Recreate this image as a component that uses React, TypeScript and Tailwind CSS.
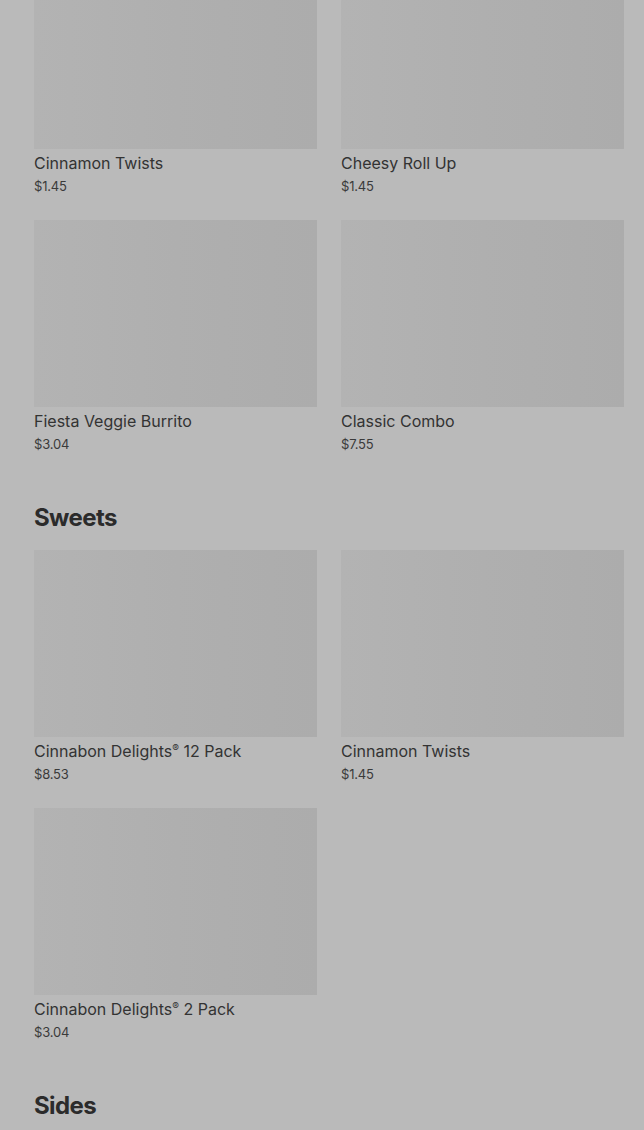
import React from 'react'

type Item = { name: string; price: string }

const sections: { title?: string; items: Item[] }[] = [
  {
    items: [
      { name: 'Cinnamon Twists', price: '$1.45' },
      { name: 'Cheesy Roll Up', price: '$1.45' },
      { name: 'Fiesta Veggie Burrito', price: '$3.04' },
      { name: 'Classic Combo', price: '$7.55' },
    ],
  },
  {
    title: 'Sweets',
    items: [
      { name: 'Cinnabon Delights® 12 Pack', price: '$8.53' },
      { name: 'Cinnamon Twists', price: '$1.45' },
      { name: 'Cinnabon Delights® 2 Pack', price: '$3.04' },
    ],
  },
  { title: 'Sides', items: [] },
]

const Card = ({ item }: { item: Item }) => {
  return (
    <div className="flex flex-col">
      <div className="h-[187px] w-full bg-gradient-to-r from-[#b3b3b3] via-[#afafaf] to-[#acacac]" />
      <p className="mt-[2px] text-[16px] leading-6 text-[#333333]">
        {item.name.split('®').map((part, i, arr) => (
          <React.Fragment key={i}>
            {part}
            {i < arr.length - 1 && <sup className="text-[10px] -top-[5px]">®</sup>}
          </React.Fragment>
        ))}
      </p>
      <p className="mt-[1px] text-[13px] leading-5 tracking-[-0.2px] text-[#3a3a3a]">{item.price}</p>
    </div>
  )
}

const App = () => {
  return (
    <div
      className="min-h-[1130px] h-[1130px] overflow-hidden bg-[#bababa] pl-[34px] pr-[20px]"
      style={{ fontFamily: 'Inter, "Noto Sans", sans-serif' }}
    >
      <div className="-mt-[38px]">
        {sections.map((section, idx) => (
          <section key={idx} className={section.title ? 'mt-12' : ''}>
            {section.title && (
              <h2 className="mb-4 text-[24px] leading-8 font-bold text-[#2b2b2b] tracking-[-0.6px]">
                {section.title}
              </h2>
            )}
            <div className="grid grid-cols-2 gap-x-6 gap-y-[24px]">
              {section.items.map((item, i) => (
                <Card key={i} item={item} />
              ))}
            </div>
          </section>
        ))}
      </div>
    </div>
  )
}

export default App
